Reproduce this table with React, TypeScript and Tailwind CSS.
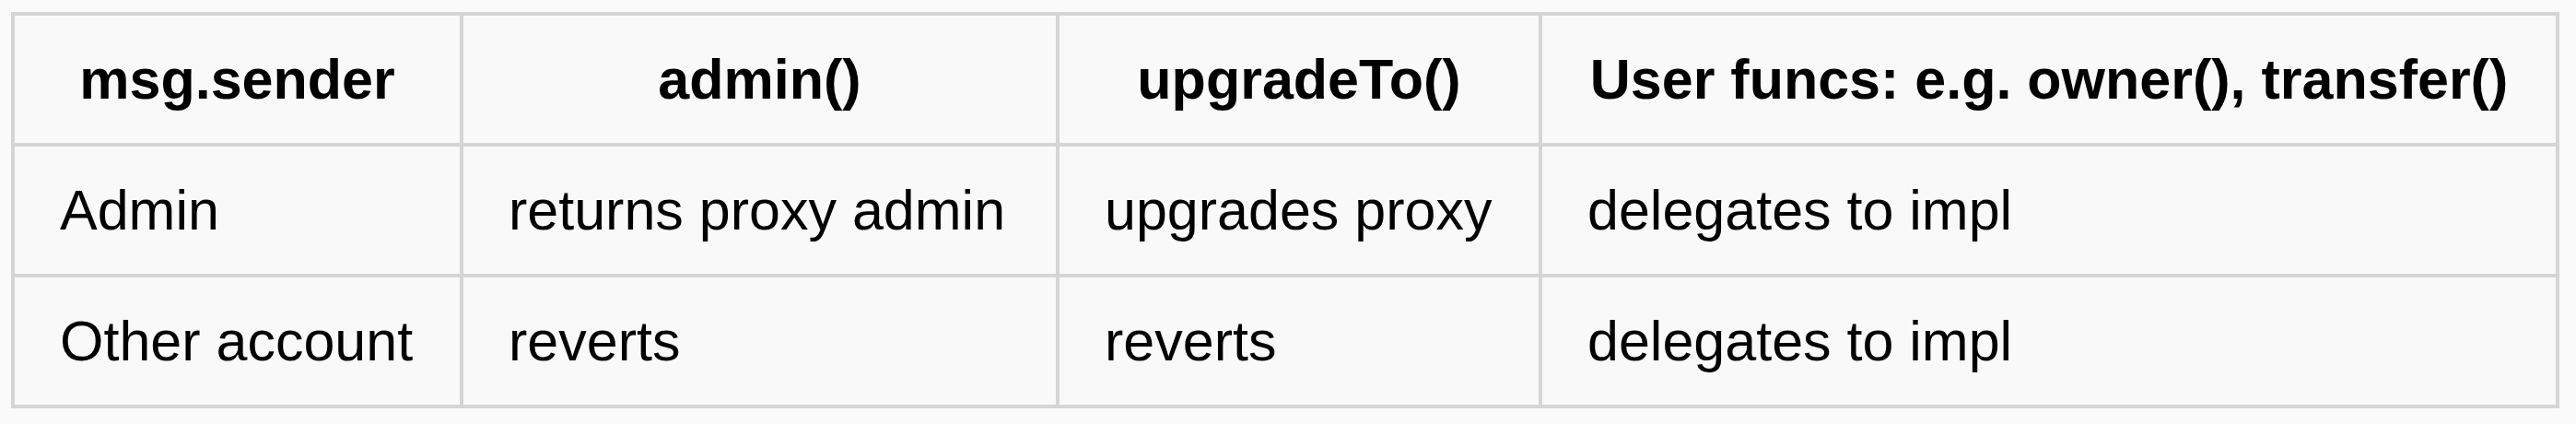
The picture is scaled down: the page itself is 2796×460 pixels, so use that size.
const headers = ["msg.sender", "admin()", "upgradeTo()", "User funcs: e.g. owner(), transfer()"];

const rows = [
  ["Admin", "returns proxy admin", "upgrades proxy", "delegates to impl"],
  ["Other account", "reverts", "reverts", "delegates to impl"],
];

export default function App() {
  return (
    <div
      className="w-[2796px] h-[460px] bg-[#fafafa] pl-[12px] pt-[13px] text-black"
      style={{ fontFamily: '"Liberation Sans", Arial, Helvetica, sans-serif' }}
    >
      <div className="grid grid-cols-[487px_647px_524px_1104px] w-fit border-l-4 border-t-4 border-[#d5d5d5] bg-[#f9f9f9] text-[61px]">
        {headers.map((h) => (
          <div
            key={h}
            className="border-r-4 border-b-4 border-[#d5d5d5] px-[48px] py-[22px] leading-[94px] font-bold text-center whitespace-nowrap"
          >
            {h}
          </div>
        ))}
        {rows.map((row, i) =>
          row.map((cell, j) => (
            <div
              key={`${i}-${j}`}
              className="border-r-4 border-b-4 border-[#d5d5d5] px-[49px] py-[22px] leading-[94px] whitespace-nowrap"
            >
              {cell}
            </div>
          ))
        )}
      </div>
    </div>
  );
}
